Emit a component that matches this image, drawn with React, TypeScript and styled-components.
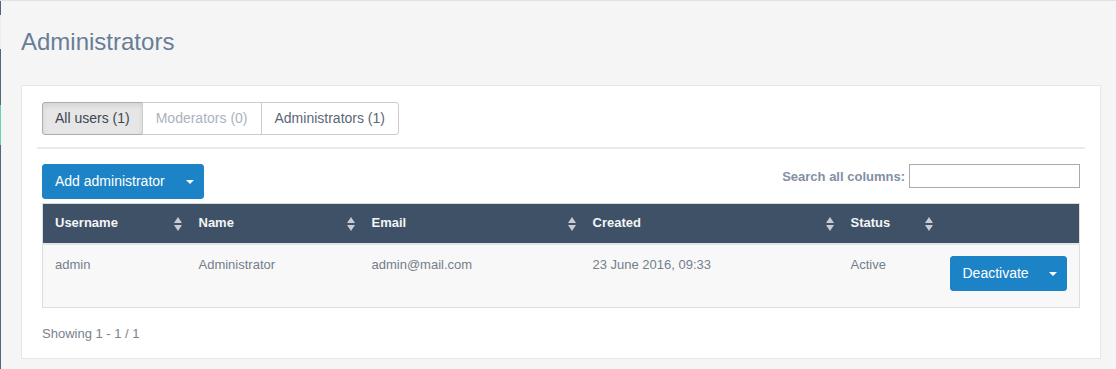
import styled, { createGlobalStyle } from 'styled-components'

const GlobalStyle = createGlobalStyle`
  html, body {
    margin: 0;
    padding: 0;
    background: #f5f5f5;
  }
  body {
    font-family: "Liberation Sans", Arial, sans-serif;
    font-size: 13px;
    color: #6f7b8a;
  }
  * { box-sizing: border-box; }
`

const Page = styled.div`
  display: flex;
  min-height: 369px;
  border-top: 1px solid #dfe1e6;
`

const Strip = styled.div`
  display: flex;
  flex-direction: column;
  width: 1px;
  flex-shrink: 0;
`

const StripPart = styled.div<{ $h?: number; $color: string }>`
  height: ${(p) => (p.$h ? `${p.$h}px` : 'auto')};
  flex: ${(p) => (p.$h ? '0 0 auto' : '1 1 auto')};
  background: ${(p) => p.$color};
`

const Main = styled.main`
  flex: 1;
  padding: 28px 17px 10px 20px;
`

const Title = styled.h1`
  margin: 0 0 30px;
  font-size: 24px;
  font-weight: 400;
  line-height: 26px;
  color: #697d96;
`

const Panel = styled.section`
  background: #fff;
  border: 1px solid #e7e7e7;
  padding: 16px 20px 15px;
`

const TabGroup = styled.div`
  display: inline-flex;
`

const Tab = styled.button<{ $active?: boolean; $muted?: boolean }>`
  font-family: inherit;
  font-size: 14px;
  line-height: 19px;
  padding: 6px ${(p) => (p.$active ? 12 : 13)}px;
  margin-left: -1px;
  background: ${(p) => (p.$active ? '#e6e6e6' : '#fff')};
  border: 1px solid ${(p) => (p.$active ? '#adadad' : '#ccc')};
  box-shadow: ${(p) => (p.$active ? 'inset 0 3px 5px rgba(0,0,0,0.08)' : 'none')};
  color: ${(p) => (p.$muted ? '#a9b3bf' : p.$active ? '#3d4652' : '#5b6775')};
  cursor: pointer;
  &:first-child {
    margin-left: 0;
    border-radius: 3px 0 0 3px;
  }
  &:last-child {
    border-radius: 0 3px 3px 0;
  }
`

const Divider = styled.hr`
  border: 0;
  border-top: 2px solid #e7eaec;
  margin: 12px -5px 15px;
`

const Toolbar = styled.div`
  display: flex;
  justify-content: space-between;
  align-items: flex-start;
  margin-bottom: 4px;
`

const PrimaryButton = styled.button<{ $block?: boolean }>`
  display: inline-flex;
  align-items: center;
  justify-content: space-between;
  width: ${(p) => (p.$block ? '100%' : 'auto')};
  font-family: inherit;
  font-size: 14px;
  line-height: 19px;
  padding: 7px 9px 7px 12px;
  background: #1c84c6;
  color: #fff;
  border: 1px solid #1c84c6;
  border-radius: 3px;
  cursor: pointer;
`

const Caret = styled.span<{ $gap: number }>`
  display: inline-block;
  margin-left: ${(p) => p.$gap}px;
  width: 0;
  height: 0;
  border-left: 4px solid transparent;
  border-right: 4px solid transparent;
  border-top: 4px solid #fff;
`

const SearchLabel = styled.label`
  display: flex;
  align-items: center;
  gap: 4px;
  font-weight: 700;
  font-size: 13px;
  color: #8390a2;
`

const SearchInput = styled.input`
  width: 171px;
  height: 24px;
  border: 1px solid #aaa;
  padding: 2px 4px;
  font-family: inherit;
`

const Table = styled.table`
  width: 100%;
  table-layout: fixed;
  border-collapse: collapse;
  border: 1px solid #ddd;
  border-top-color: #d6d9dd;
`

const HeadCell = styled.th`
  position: relative;
  text-align: left;
  background: #3e5166;
  color: #f3f5f7;
  font-size: 13px;
  font-weight: 700;
  line-height: 20px;
  padding: 9px 12px 10px;
  border-bottom: 2px solid #e2e4e7;
`

const SortIcon = styled.svg`
  position: absolute;
  right: 5px;
  top: 13px;
`

const Row = styled.tr`
  background: #f8f8f8;
`

const Cell = styled.td`
  vertical-align: top;
  font-size: 13px;
  line-height: 18px;
  color: #737e8c;
  padding: 11px 12px 16px;
`

const Footer = styled.div`
  margin-top: 17px;
  line-height: 18px;
  font-size: 13px;
  color: #7a828d;
`

function Sort() {
  return (
    <SortIcon width="8" height="14" viewBox="0 0 8 14">
      <path d="M4 0 L8 6 L0 6 Z" fill="#c9ccd1" />
      <path d="M0 8 L8 8 L4 14 Z" fill="#c9ccd1" />
    </SortIcon>
  )
}

const columns = [
  { label: 'Username', width: 144 },
  { label: 'Name', width: 173 },
  { label: 'Email', width: 221 },
  { label: 'Created', width: 258 },
  { label: 'Status', width: 99 },
  { label: '', width: 142 },
]

export default function App() {
  return (
    <>
      <GlobalStyle />
      <Page>
        <Strip>
          <StripPart $h={14} $color="#55657a" />
          <StripPart $h={34} $color="#eeeeee" />
          <StripPart $h={56} $color="#55657a" />
          <StripPart $h={40} $color="#6ad0b8" />
          <StripPart $color="#55657a" />
        </Strip>
        <Main>
          <Title>Administrators</Title>
          <Panel>
            <TabGroup>
              <Tab $active>All users (1)</Tab>
              <Tab $muted>Moderators (0)</Tab>
              <Tab>Administrators (1)</Tab>
            </TabGroup>
            <Divider />
            <Toolbar>
              <PrimaryButton>
                Add administrator
                <Caret $gap={21} />
              </PrimaryButton>
              <SearchLabel>
                Search all columns:
                <SearchInput type="text" />
              </SearchLabel>
            </Toolbar>
            <Table>
              <colgroup>
                {columns.map((c, i) => (
                  <col key={i} style={{ width: c.width }} />
                ))}
              </colgroup>
              <thead>
                <tr>
                  {columns.map((c, i) => (
                    <HeadCell key={i}>
                      {c.label}
                      {c.label && <Sort />}
                    </HeadCell>
                  ))}
                </tr>
              </thead>
              <tbody>
                <Row>
                  <Cell>admin</Cell>
                  <Cell>Administrator</Cell>
                  <Cell>admin@mail.com</Cell>
                  <Cell>23 June 2016, 09:33</Cell>
                  <Cell>Active</Cell>
                  <Cell>
                    <PrimaryButton $block>
                      Deactivate
                      <Caret $gap={8} />
                    </PrimaryButton>
                  </Cell>
                </Row>
              </tbody>
            </Table>
            <Footer>Showing 1 - 1 / 1</Footer>
          </Panel>
        </Main>
      </Page>
    </>
  )
}
